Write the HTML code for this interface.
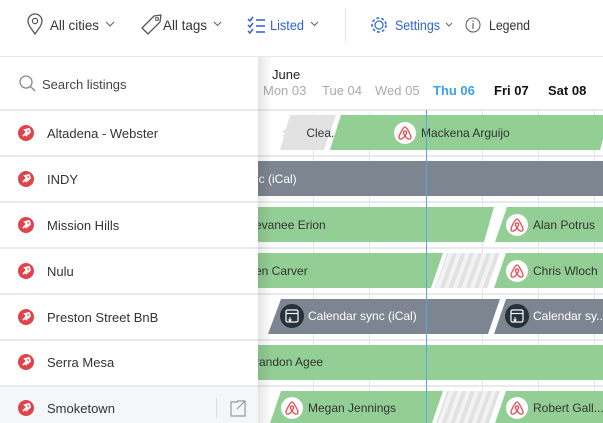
<!DOCTYPE html>
<html><head><meta charset="utf-8"><style>
html,body{margin:0;padding:0;background:#fff;width:603px;height:423px;overflow:hidden}
svg{display:block}
text{font-family:"Liberation Sans",sans-serif}
</style></head><body>
<svg width="603" height="423" viewBox="0 0 603 423" xmlns="http://www.w3.org/2000/svg">
<defs>
<linearGradient id="sh" x1="0" x2="1" y1="0" y2="0"><stop offset="0" stop-color="#000" stop-opacity="0.10"/><stop offset="1" stop-color="#000" stop-opacity="0"/></linearGradient>
<pattern id="hatch" width="8" height="8" patternUnits="userSpaceOnUse" patternTransform="rotate(20)"><rect width="8" height="8" fill="#f3f3f3"/><rect width="4" height="8" fill="#e2e2e2"/></pattern>
<g id="abnb"><circle r="11" fill="#fff"/><path d="M0,-6 C-2,-6 -6,3 -6,4 C-6,7 -3,7 0,3 C3,7 6,7 6,4 C6,3 2,-6 0,-6 Z M0,3 C-2,0 -2,-2 0,-2 C2,-2 2,0 0,3" fill="none" stroke="#e8474f" stroke-width="1.3"/></g>
<g id="ical"><circle r="12" fill="#27313c"/><rect x="-6" y="-6" width="12" height="12" rx="1.5" fill="none" stroke="#fff" stroke-width="1.2"/><line x1="-6" y1="-2.5" x2="6" y2="-2.5" stroke="#fff" stroke-width="1.2"/><path d="M-2,1 v4 M-3.5,3.5 L-2,5 L-0.5,3.5" stroke="#fff" fill="none" stroke-width="1"/></g>
<g id="pin"><circle r="8" fill="#e0434b"/><path d="M-3,3 L1,-1 L-1,-3 L3,-4 L4,-1 L2,1 L0,-1 M-1,1 L1,3" stroke="#fff" stroke-width="1.8" fill="none"/></g>
</defs>

<!-- header -->
<rect x="0" y="0" width="603" height="57" fill="#fff"/>
<line x1="0" y1="56.5" x2="603" y2="56.5" stroke="#e6e8eb"/>
<path d="M35,34 C31,28 28,25 28,21 A7,7 0 0 1 42,21 C42,25 39,28 35,34 Z" fill="none" stroke="#555" stroke-width="1.3"/>
<circle cx="35" cy="21" r="2.6" fill="none" stroke="#555" stroke-width="1.2"/>
<text x="50" y="30" font-size="14" fill="#333" textLength="49" lengthAdjust="spacingAndGlyphs">All cities</text>
<path d="M106,22 l4,4 l4,-4" fill="none" stroke="#666" stroke-width="1.1"/>
<path d="M146,34 L142,30 L154,18 L161,17 L160,24 L148,36 Z" fill="none" stroke="#555" stroke-width="1.3" transform="translate(0,-2)"/>
<circle cx="157" cy="19" r="1.5" fill="none" stroke="#555"/>
<text x="163" y="30" font-size="14" fill="#333" textLength="44" lengthAdjust="spacingAndGlyphs">All tags</text>
<path d="M214,22 l3.5,3.5 l3.5,-3.5" fill="none" stroke="#666" stroke-width="1.1"/>
<g stroke="#2f5fd0" stroke-width="1.5" fill="none"><path d="M248,19 l2,2 l3,-4 M248,25 l2,2 l3,-4 M248,31 l2,2 l3,-4"/><path d="M256,20 h9 M256,26 h9 M256,32 h9"/></g>
<text x="270" y="30" font-size="14" fill="#2f63d6" textLength="34" lengthAdjust="spacingAndGlyphs">Listed</text>
<path d="M311,22 l3.5,3.5 l3.5,-3.5" fill="none" stroke="#666" stroke-width="1.1"/>
<line x1="345.5" y1="8" x2="345.5" y2="42" stroke="#e6e8eb"/>
<circle cx="379" cy="25" r="4" fill="none" stroke="#3b6fe0" stroke-width="1.3"/>
<circle cx="379" cy="25" r="7" fill="none" stroke="#3b6fe0" stroke-width="1.6" stroke-dasharray="3 2"/>
<text x="395" y="30" font-size="14" fill="#2f63d6" textLength="45" lengthAdjust="spacingAndGlyphs">Settings</text>
<path d="M446,23 l3,3 l3,-3" fill="none" stroke="#666" stroke-width="1.1"/>
<circle cx="473" cy="25" r="7" fill="none" stroke="#666" stroke-width="1.1"/>
<line x1="473" y1="23" x2="473" y2="29" stroke="#666" stroke-width="1.2"/><circle cx="473" cy="21" r="0.8" fill="#666"/>
<text x="489" y="30" font-size="14" fill="#333" textLength="41" lengthAdjust="spacingAndGlyphs">Legend</text>

<!-- timeline header -->
<text x="272" y="79" font-size="13" fill="#222">June</text>
<text x="263" y="95" font-size="13" fill="#aaa">Mon 03</text>
<text x="322" y="95" font-size="13" fill="#aaa">Tue 04</text>
<text x="375" y="95" font-size="13" fill="#aaa">Wed 05</text>
<text x="433" y="95" font-size="13" fill="#3ba0e6" font-weight="bold">Thu 06</text>
<text x="494" y="95" font-size="13" fill="#111" font-weight="bold">Fri 07</text>
<text x="548" y="95" font-size="13" fill="#111" font-weight="bold">Sat 08</text>

<!-- row lines -->
<g stroke="#e8eaed" stroke-width="2">
<line x1="0" y1="110" x2="603" y2="110"/><line x1="0" y1="156" x2="603" y2="156"/><line x1="0" y1="202" x2="603" y2="202"/><line x1="0" y1="248" x2="603" y2="248"/><line x1="0" y1="294" x2="603" y2="294"/><line x1="0" y1="340" x2="603" y2="340"/><line x1="0" y1="386" x2="603" y2="386"/>
</g>
<rect x="0" y="387" width="258" height="36" fill="#f4f6fa"/>
<!-- vertical grid -->
<g stroke="#e3e5e8" stroke-width="1"><line x1="313.5" y1="110" x2="313.5" y2="423"/><line x1="369.5" y1="110" x2="369.5" y2="423"/><line x1="482.5" y1="110" x2="482.5" y2="423"/><line x1="538.5" y1="110" x2="538.5" y2="423"/><line x1="594.5" y1="110" x2="594.5" y2="423"/></g>

<!-- bars -->
<text x="283" y="137" font-size="11" fill="#ccc">$600</text>
<polygon points="336,115 288,115 326,115 336,115 324,150 280,150 290,115" fill="#e2e2e2"/>
<text x="341" y="137" font-size="12" fill="#333" text-anchor="end">Clea...</text>
<polygon points="341,115 610,115 600,150 330,150" fill="#93cf95"/>
<use href="#abnb" x="405" y="133"/><text x="421" y="137" font-size="12" fill="#333">Mackena Arguijo</text>

<rect x="258" y="161" width="345" height="35" fill="#7d8590"/>
<text x="252" y="183" font-size="12" fill="#fff">nc (iCal)</text>

<polygon points="258,207 494,207 484,242 258,242" fill="#93cf95"/>
<polygon points="507,207 610,207 610,242 495,242" fill="#93cf95"/>
<text x="255" y="229" font-size="12" fill="#333">evanee Erion</text>
<use href="#abnb" x="517" y="225"/><text x="533" y="229" font-size="12" fill="#333">Alan Potrus</text>

<polygon points="258,253 443,253 431,288 258,288" fill="#93cf95"/>
<polygon points="447,253 500,253 488,288 435,288" fill="url(#hatch)"/>
<polygon points="506,253 610,253 610,288 494,288" fill="#93cf95"/>
<text x="255" y="275" font-size="12" fill="#333">en Carver</text>
<use href="#abnb" x="517" y="271"/><text x="533" y="275" font-size="12" fill="#333">Chris Wloch</text>

<polygon points="281,299 500,299 488,334 268,334" fill="#7d8590"/>
<polygon points="506,299 610,299 610,334 494,334" fill="#7d8590"/>
<use href="#ical" x="292" y="316"/><text x="308" y="320" font-size="12" fill="#fff">Calendar sync (iCal)</text>
<use href="#ical" x="517" y="316"/><text x="533" y="320" font-size="12" fill="#fff">Calendar sy...</text>

<rect x="258" y="345" width="345" height="35" fill="#93cf95"/>
<text x="255" y="366" font-size="12" fill="#333">randon Agee</text>

<polygon points="281,391 443,391 431,426 269,426" fill="#93cf95"/>
<polygon points="447,391 500,391 488,426 435,426" fill="url(#hatch)"/>
<polygon points="506,391 610,391 610,426 494,426" fill="#93cf95"/>
<use href="#abnb" x="292" y="408"/><text x="308" y="412" font-size="12" fill="#333">Megan Jennings</text>
<use href="#abnb" x="517" y="408"/><text x="533" y="412" font-size="12" fill="#333">Robert Gall...</text>

<line x1="426.5" y1="110" x2="426.5" y2="423" stroke="#5aa7de" stroke-width="1"/>

<!-- sidebar -->
<rect x="258" y="57" width="14" height="366" fill="url(#sh)"/>
<rect x="0" y="57" width="258" height="52" fill="#fff"/>
<circle cx="26" cy="82" r="6" fill="none" stroke="#888" stroke-width="1.3"/><line x1="30.5" y1="86.5" x2="35" y2="91" stroke="#888" stroke-width="1.3"/>
<text x="42" y="89" font-size="13" fill="#444">Search listings</text>
<g font-size="13" fill="#333">
<rect x="0" y="111" width="258" height="44" fill="#fff"/><use href="#pin" x="26" y="133"/><text x="47" y="138">Altadena - Webster</text>
<rect x="0" y="157" width="258" height="44" fill="#fff"/><use href="#pin" x="26" y="179"/><text x="47" y="184">INDY</text>
<rect x="0" y="203" width="258" height="44" fill="#fff"/><use href="#pin" x="26" y="225"/><text x="47" y="230">Mission Hills</text>
<rect x="0" y="249" width="258" height="44" fill="#fff"/><use href="#pin" x="26" y="271"/><text x="47" y="276">Nulu</text>
<rect x="0" y="295" width="258" height="44" fill="#fff"/><use href="#pin" x="26" y="317"/><text x="47" y="322">Preston Street BnB</text>
<rect x="0" y="341" width="258" height="44" fill="#fff"/><use href="#pin" x="26" y="362"/><text x="47" y="367">Serra Mesa</text>
<use href="#pin" x="26" y="408"/><text x="47" y="413">Smoketown</text>
</g>
<line x1="216.5" y1="398" x2="216.5" y2="418" stroke="#ddd"/>
<path d="M238,402 h-7 v14 h14 v-7 M237,401 h8 v8 M245,401 l-8,8" fill="none" stroke="#999" stroke-width="1.2"/>
</svg>
</body></html>
